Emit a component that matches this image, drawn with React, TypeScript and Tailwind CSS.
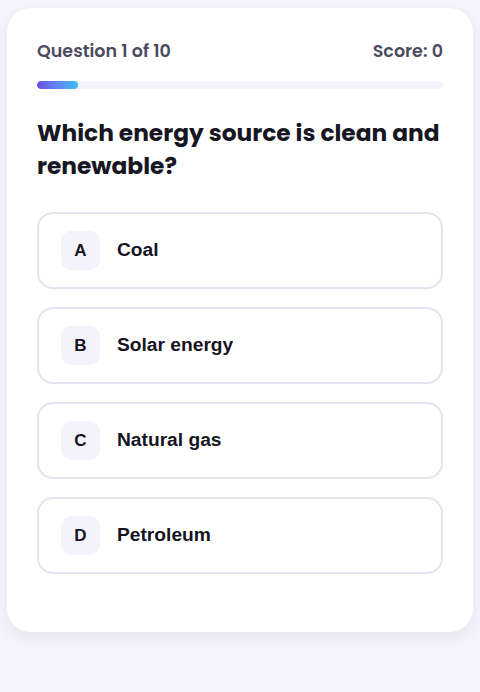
const options = [
  { key: 'A', label: 'Coal' },
  { key: 'B', label: 'Solar energy' },
  { key: 'C', label: 'Natural gas' },
  { key: 'D', label: 'Petroleum' },
];

export default function App() {
  const current = 1;
  const total = 10;
  const score = 0;

  return (
    <div className="min-h-[692px] bg-[#f5f4fc] pt-2 px-[7px] pb-10">
      <div className="rounded-[24px] bg-white shadow-[0_6px_16px_rgba(60,50,120,0.08)] px-[30px] pt-[31px] pb-[58px]">
        {/* header */}
        <div className="flex items-center justify-between text-[17.5px] leading-6 font-semibold text-[#4b4a60] font-['Poppins','Inter',sans-serif]">
          <span>Question {current} of {total}</span>
          <span>Score: {score}</span>
        </div>

        {/* progress */}
        <div className="mt-[18px] h-2 w-full rounded-full bg-[#f3f2fa] overflow-hidden">
          <div
            className="h-full rounded-full bg-gradient-to-r from-[#6a4ce6] to-[#38bdf8]"
            style={{ width: `${(current / total) * 100}%` }}
          />
        </div>

        <h2 className="mt-[28px] text-[23.3px] leading-[33px] font-bold text-[#171623] font-['Poppins','Inter',sans-serif]">
          Which energy source is clean and renewable?
        </h2>

        <div className="mt-[29px] flex flex-col gap-[18px]">
          {options.map((opt) => (
            <button
              key={opt.key}
              className="flex items-center gap-[17px] rounded-[16px] border-2 border-[#e4e3f0] bg-white px-[22px] py-[17px] text-left"
            >
              <span className="flex h-[39px] w-[39px] items-center justify-center rounded-[10px] bg-[#f4f3fb] text-[17px] font-bold text-[#15141f] font-['Liberation_Sans',Arial,sans-serif]">
                {opt.key}
              </span>
              <span className="text-[19.2px] font-bold text-[#15141f] font-['Liberation_Sans',Arial,sans-serif]">
                {opt.label}
              </span>
            </button>
          ))}
        </div>
      </div>
    </div>
  );
}
